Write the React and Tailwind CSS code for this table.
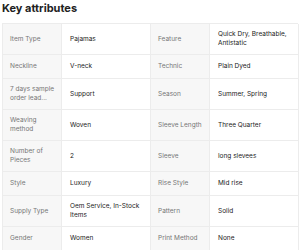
import React from 'react';

const rows = [
  ['Item Type', 'Pajamas', 'Feature', 'Quick Dry, Breathable, Antistatic'],
  ['Neckline', 'V-neck', 'Technic', 'Plain Dyed'],
  ['7 days sample order lead...', 'Support', 'Season', 'Summer, Spring'],
  ['Weaving method', 'Woven', 'Sleeve Length', 'Three Quarter'],
  ['Number of Pieces', '2', 'Sleeve', 'long slevees'],
  ['Style', 'Luxury', 'Rise Style', 'Mid rise'],
  ['Supply Type', 'Oem Service, In-Stock Items', 'Pattern', 'Solid'],
  ['Gender', 'Women', 'Print Method', 'None'],
];

function Label({ children }) {
  return (
    <div className="flex items-center min-h-[24px] py-[6px] pl-[7px] pr-[4px] bg-[#f7f7f7] text-[#767676] border-b border-r border-[#ececec]">
      {children}
    </div>
  );
}

function Value({ children }) {
  return (
    <div className="flex items-center min-h-[24px] py-[6px] pl-[8px] pr-[4px] bg-white text-[#222] border-b border-r border-[#ececec]">
      {children}
    </div>
  );
}

export default function App() {
  return (
    <div className="w-[300px] h-[250px] overflow-hidden bg-white px-[2px] font-['Inter',sans-serif]">
      <h2 className="pt-[1px] pb-[7px] text-[11px] leading-[15px] font-bold text-[#222]">Key attributes</h2>
      <div className="grid grid-cols-[59px_89px_59px_89px] border-t border-l border-[#ececec] text-[6.5px] leading-[9px]">
        {rows.map((r) => (
          <React.Fragment key={r[0]}>
            <Label>{r[0]}</Label>
            <Value>{r[1]}</Value>
            <Label>{r[2]}</Label>
            <Value>{r[3]}</Value>
          </React.Fragment>
        ))}
      </div>
    </div>
  );
}
